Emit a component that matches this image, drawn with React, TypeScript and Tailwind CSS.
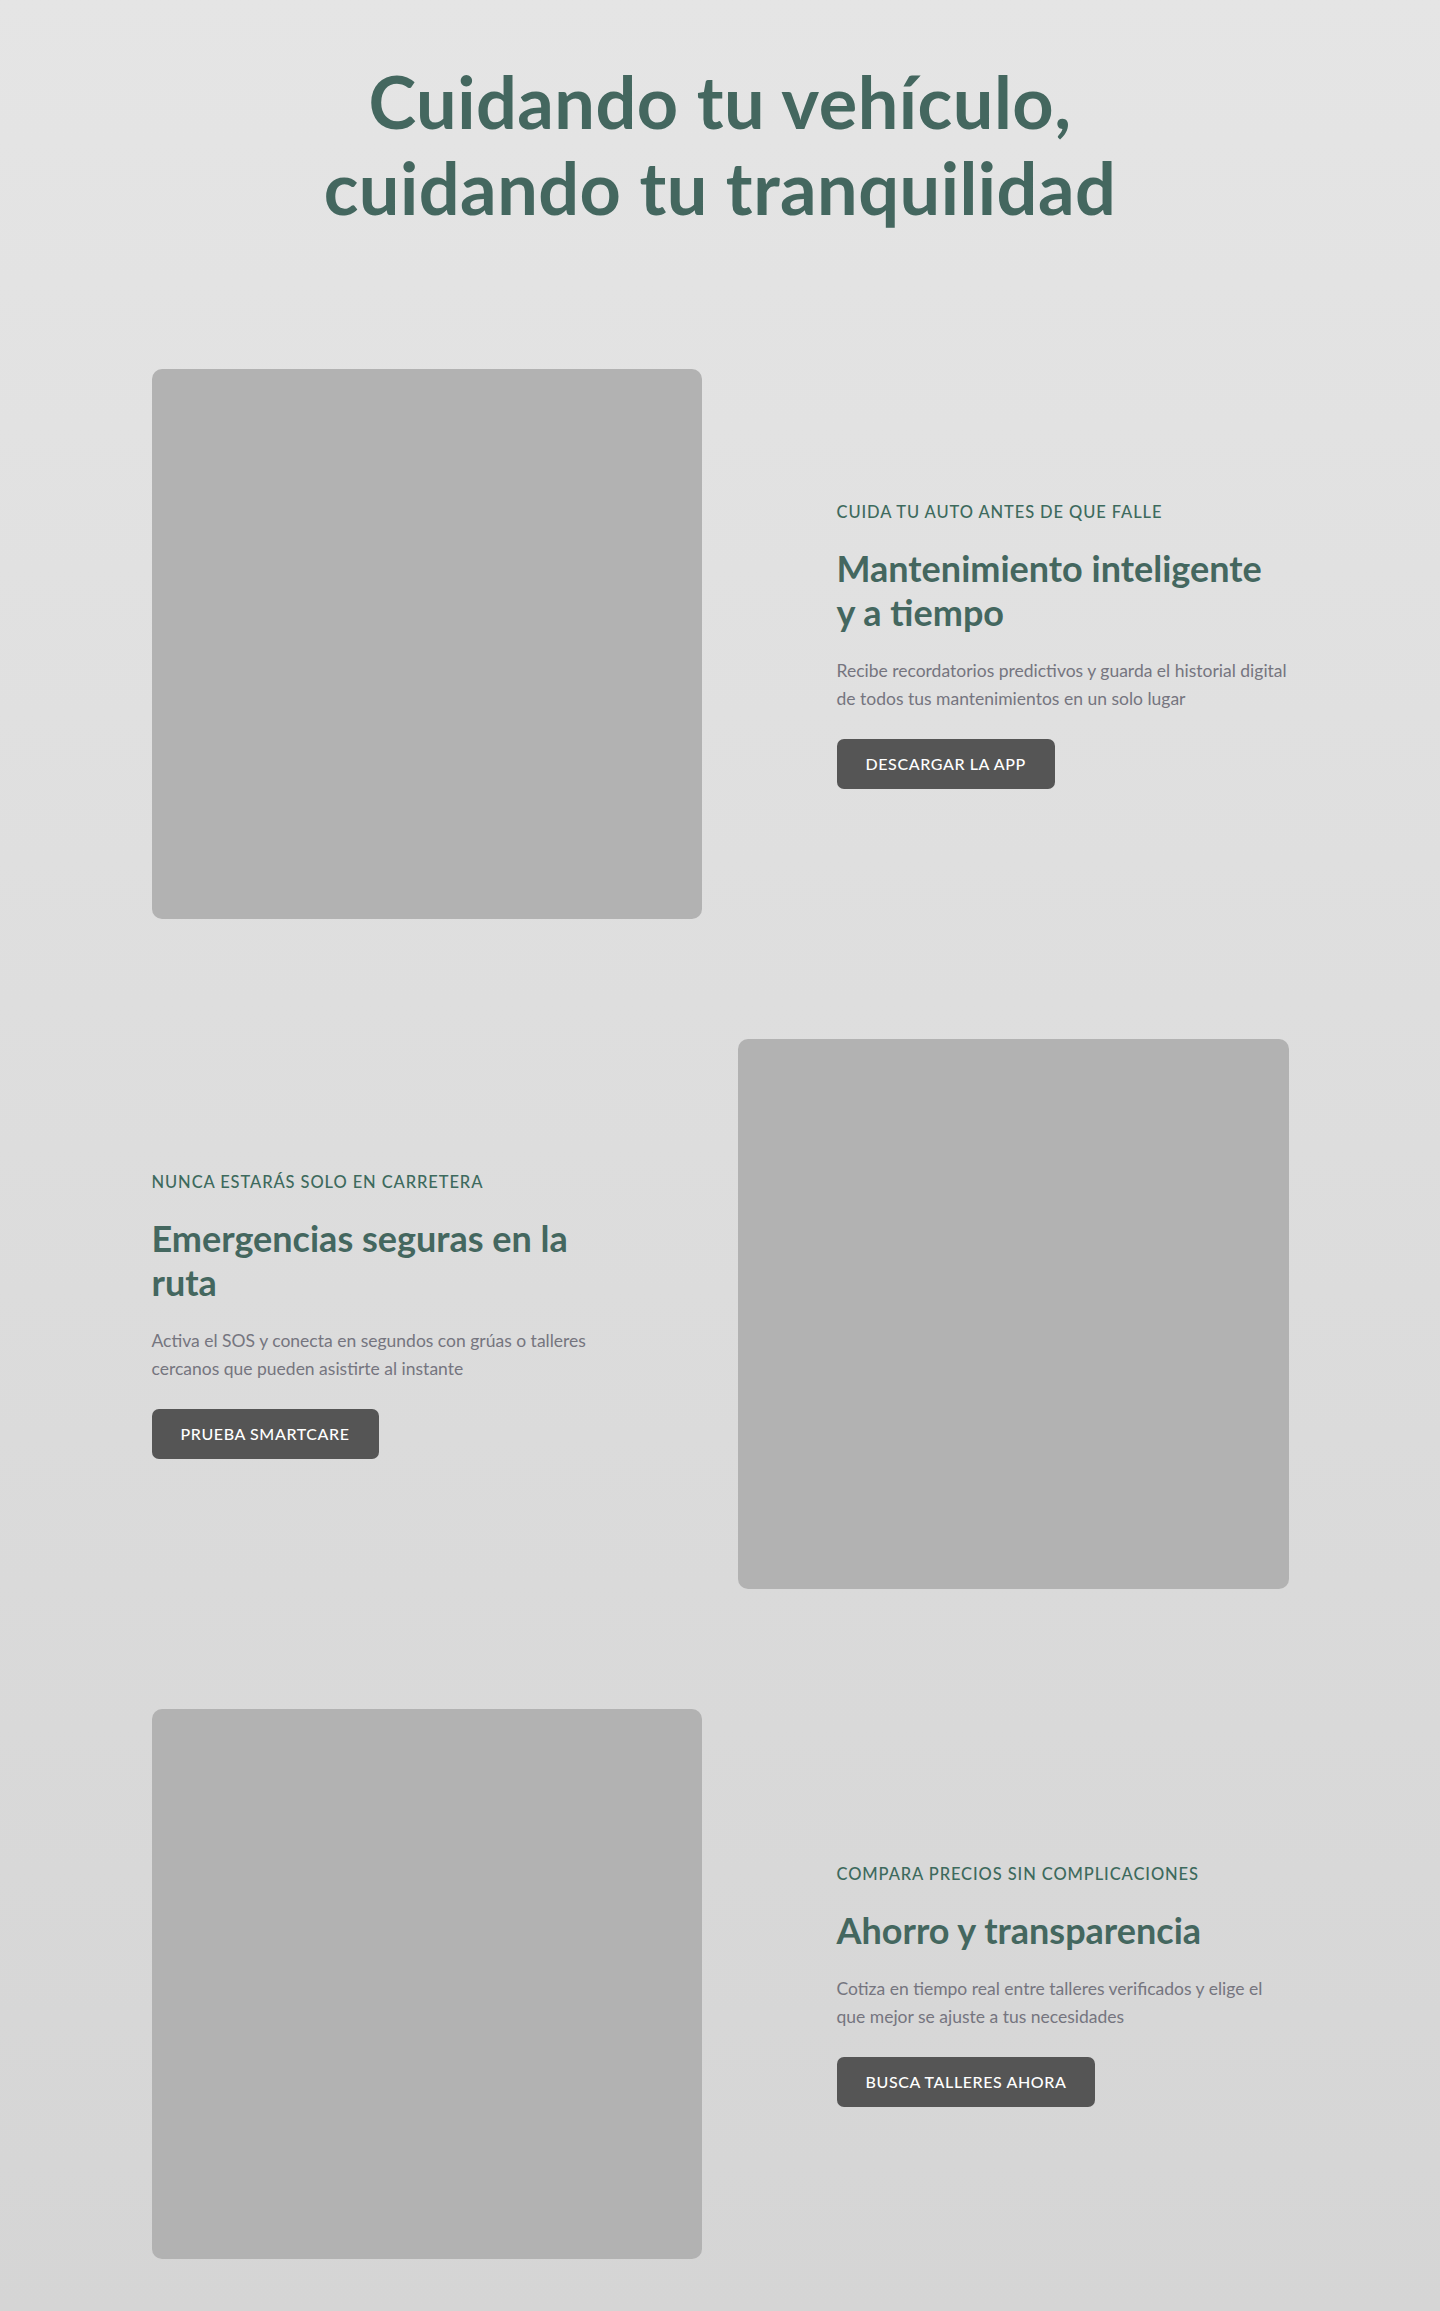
type Feature = {
  eyebrow: string
  title: string
  text: string
  cta: string
  imageLeft: boolean
}

const features: Feature[] = [
  {
    eyebrow: 'Cuida tu auto antes de que falle',
    title: 'Mantenimiento inteligente y a tiempo',
    text: 'Recibe recordatorios predictivos y guarda el historial digital de todos tus mantenimientos en un solo lugar',
    cta: 'Descargar la app',
    imageLeft: true,
  },
  {
    eyebrow: 'Nunca estarás solo en carretera',
    title: 'Emergencias seguras en la ruta',
    text: 'Activa el SOS y conecta en segundos con grúas o talleres cercanos que pueden asistirte al instante',
    cta: 'Prueba SmartCare',
    imageLeft: false,
  },
  {
    eyebrow: 'Compara precios sin complicaciones',
    title: 'Ahorro y transparencia',
    text: 'Cotiza en tiempo real entre talleres verificados y elige el que mejor se ajuste a tus necesidades',
    cta: 'Busca talleres ahora',
    imageLeft: true,
  },
]

function FeatureText({ f }: { f: Feature }) {
  return (
    <div className={`w-[452px] ${f.imageLeft ? 'justify-self-end' : 'justify-self-start'}`}>
      <p className="text-[16.5px] font-medium uppercase leading-[24px] tracking-[0.9px] text-[#3d6a5d]">
        {f.eyebrow}
      </p>
      <h2 className="mt-[22px] pr-[6px] text-[36px] font-bold leading-[44px] text-[#44675f]">{f.title}</h2>
      <p className="mr-[-6px] mt-[23px] text-[17.5px] font-normal leading-[28px] text-[#75757f]">{f.text}</p>
      <button
        type="button"
        className="mt-[26px] h-[50px] rounded-[7px] bg-[#555555] px-[29px] text-[16px] font-medium uppercase tracking-[0.6px] text-white"
      >
        {f.cta}
      </button>
    </div>
  )
}

function Placeholder() {
  return <div className="h-[550px] w-full rounded-[10px] bg-[#b2b2b2]" />
}

export default function App() {
  return (
    <div className="min-h-screen bg-gradient-to-b from-[#e5e5e5] to-[#d5d5d5] font-['Lato',sans-serif]">
      <h1 className="pt-[58px] text-center text-[72px] font-bold leading-[86px] tracking-[0.5px] text-[#44675f]">
        Cuidando tu vehículo,
        <br />
        cuidando tu tranquilidad
      </h1>

      <div className="mx-auto mt-[139px] flex w-[1137px] flex-col gap-[120px] pb-[51px]">
        {features.map((f) => (
          <section key={f.title} className="grid grid-cols-2 items-center gap-9">
            {f.imageLeft ? (
              <>
                <Placeholder />
                <FeatureText f={f} />
              </>
            ) : (
              <>
                <FeatureText f={f} />
                <Placeholder />
              </>
            )}
          </section>
        ))}
      </div>
    </div>
  )
}
